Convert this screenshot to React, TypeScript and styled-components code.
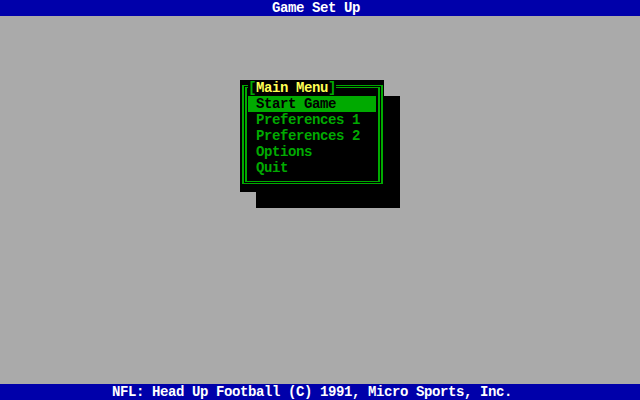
import styled, { createGlobalStyle } from "styled-components";

const CELL_W = 8;

const Color = {
    gray: "#AAAAAA",
    blue: "#0000AA",
    white: "#FFFFFF",
    green: "#00AA00",
    yellow: "#FFFF55",
    black: "#000000",
};

const GlobalStyle = createGlobalStyle`
    html, body {
        margin: 0;
        padding: 0;
        background: ${Color.gray};
    }
    * {
        box-sizing: border-box;
    }
`;

const Screen = styled.div`
    width: 640px;
    height: 400px;
    display: grid;
    grid-template-rows: 16px 1fr 16px;
    background: ${Color.gray};
    font-family: "Liberation Mono", "DejaVu Sans Mono", monospace;
    font-size: 14px;
    letter-spacing: -0.4px;
    font-weight: bold;
    line-height: 17px;
    white-space: pre;
`;

const Bar = styled.div<{ $col: number }>`
    background: ${Color.blue};
    color: ${Color.white};
    padding-left: ${(p) => p.$col * CELL_W}px;
    height: 16px;
    overflow: hidden;
`;

const Desktop = styled.div`
    padding: 64px 0 0 240px;
`;

const Window = styled.div`
    position: relative;
    width: 144px;
    height: 112px;
    background: ${Color.black};
    padding: 5px 1px 8px 2px;
    box-shadow: 16px 16px 0 ${Color.black};
`;

const Frame = styled.div<{ $inner?: boolean }>`
    height: 100%;
    border-style: solid;
    border-color: ${Color.green};
    border-width: 1px 2px;
    padding: ${(p) => (p.$inner ? "8px 2px 0 1px" : "1px")};
`;

const Title = styled.div`
    position: absolute;
    top: 0;
    left: 8px;
    height: 16px;
    overflow: hidden;
    background: ${Color.black};
    color: ${Color.green};
`;

const TitleText = styled.span`
    color: ${Color.yellow};
`;

const Item = styled.div<{ $selected?: boolean }>`
    height: 16px;
    overflow: hidden;
    padding-left: 8px;
    background: ${(p) => (p.$selected ? Color.green : "transparent")};
    color: ${(p) => (p.$selected ? Color.black : Color.green)};
`;

const items = ["Start Game", "Preferences 1", "Preferences 2", "Options", "Quit"];

function App() {
    const selected = 0;

    return (
        <>
            <GlobalStyle />
            <Screen>
                <Bar $col={34}>Game Set Up</Bar>
                <Desktop>
                    <Window>
                        <Frame>
                            <Frame $inner>
                                {items.map((label, i) => (
                                    <Item key={label} $selected={i === selected}>
                                        {label}
                                    </Item>
                                ))}
                            </Frame>
                        </Frame>
                        <Title>
                            [<TitleText>Main Menu</TitleText>]
                        </Title>
                    </Window>
                </Desktop>
                <Bar $col={14}>NFL: Head Up Football (C) 1991, Micro Sports, Inc.</Bar>
            </Screen>
        </>
    );
}

export default App;
